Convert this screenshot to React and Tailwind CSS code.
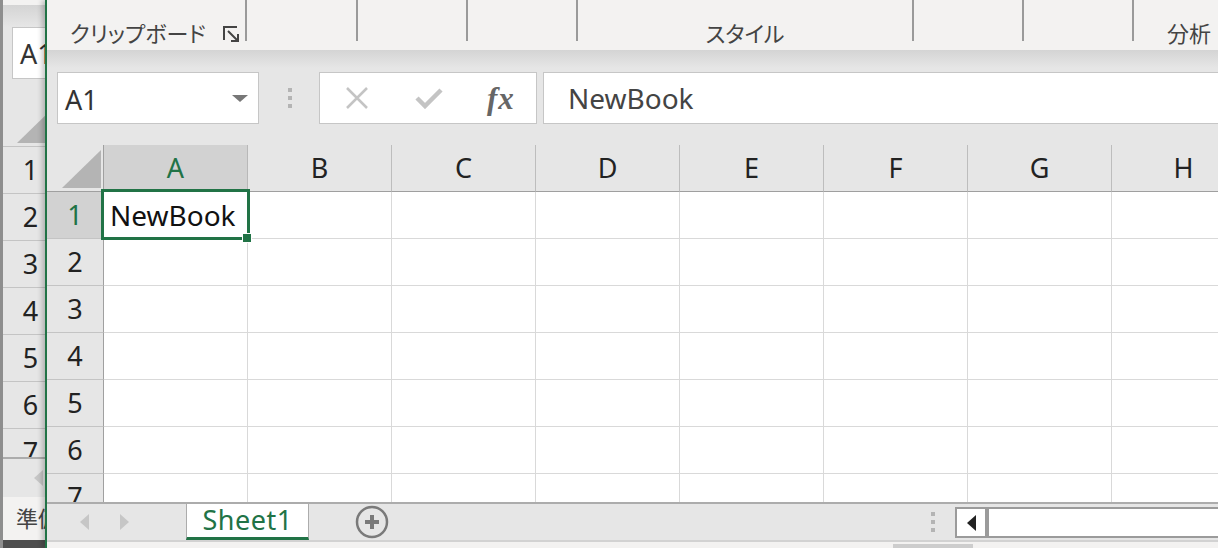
import clsx from "clsx";

const columns = ["A", "B", "C", "D", "E", "F", "G", "H"];
const rows = [1, 2, 3, 4, 5, 6, 7];

const ribbonGroups = [
  { width: "w-[198px]", label: "クリップボード", launcher: true, align: "pl-[23px]" },
  { width: "w-[109px]" },
  { width: "w-[108px]" },
  { width: "w-[108px]" },
  { width: "w-[334px]", label: "スタイル", align: "justify-center" },
  { width: "w-[108px]" },
  { width: "w-[108px]" },
  { width: "w-[140px]", label: "分析", align: "pl-[33px]" },
];

// grey select-all triangle in the sheet corner
const CornerMark = () => (
  <div className="h-[38px] w-[39px] bg-[#b4b4b4] [clip-path:polygon(100%_0,100%_100%,0_100%)]" />
);

const ArrowLeft = ({ color = "border-r-[#c6c6c6]" }) => (
  <span className={clsx("h-0 w-0 border-y-[8px] border-r-[9px] border-y-transparent", color)} />
);

const ArrowRight = () => (
  <span className="h-0 w-0 border-y-[8px] border-l-[9px] border-y-transparent border-l-[#c6c6c6]" />
);

const DotGrip = () => (
  <div className="flex flex-col gap-[4px]">
    <span className="h-[4px] w-[4px] bg-[#b4b4b4]" />
    <span className="h-[4px] w-[4px] bg-[#b4b4b4]" />
    <span className="h-[4px] w-[4px] bg-[#b4b4b4]" />
  </div>
);

// workbook window sitting behind, only its left edge shows
const BackWindow = () => (
  <aside className="flex w-[45px] shrink-0 flex-col overflow-hidden border-l-[3px] border-[#8e8e8e] bg-[#e6e6e6]">
    <div className="h-[5px] shrink-0 bg-[#f3f2f1]" />
    <div className="h-[22px] shrink-0 bg-gradient-to-b from-[#d4d4d4] to-[#e6e6e6]" />
    <div className="ml-[9px] flex h-[52px] w-[200px] shrink-0 items-center border border-[#c6c6c6] bg-white pl-[7px] pt-[3px] text-[27px] text-[#333]">
      A1
    </div>
    <div className="h-[21px] shrink-0" />
    <div className="flex h-[47px] w-[55px] shrink-0 items-end justify-end border-b border-[#c4c4c4] pb-[3px] pr-[2px]">
      <CornerMark />
    </div>
    <div className="h-[310px] shrink-0 overflow-hidden">
      {rows.map((r) => (
        <div
          key={r}
          className="flex h-[47px] w-[55px] items-center justify-center border-b border-[#c4c4c4] text-[27px] text-[#222]"
        >
          {r}
        </div>
      ))}
    </div>
    <div className="flex h-[40px] shrink-0 items-center border-t-2 border-[#acacac] pl-[31px]">
      <ArrowLeft />
    </div>
    <div className="flex h-[43px] shrink-0 items-center whitespace-nowrap bg-[#f3f2f1] pl-[13px] text-[22px] text-[#444]">
      準備完了
    </div>
    <div className="h-[8px] shrink-0 bg-[#4e4e4e]" />
  </aside>
);

const Ribbon = () => (
  <div className="flex h-[50px] shrink-0 items-start bg-[#f3f2f1]">
    {ribbonGroups.map((g, i) => (
      <div key={i} className="flex shrink-0">
        <div className={clsx("flex h-[41px] items-start pt-[22px]", g.width, g.align)}>
          {g.label && (
            <span className="whitespace-nowrap text-[22px] leading-[22px] text-[#444] [font-feature-settings:'palt']">
              {g.label}
            </span>
          )}
          {g.launcher && (
            <svg className="ml-auto mr-[6px] mt-[4px]" width="16" height="16" viewBox="0 0 16 16" fill="none" stroke="#444" strokeWidth="2">
              <path d="M1 14V1h13" />
              <path d="M5 5l9 9M8 15h7V8" />
            </svg>
          )}
        </div>
        {i < ribbonGroups.length - 1 && <div className="h-[41px] w-[2px] bg-[#9a9a9a]" />}
      </div>
    ))}
  </div>
);

const FormulaBar = () => (
  <div className="flex h-[95px] shrink-0 items-start bg-[linear-gradient(#d4d4d4,#e6e6e6_18px)] pt-[22px]">
    <div className="flex h-[52px] items-center">
      <div className="ml-[10px] flex h-[52px] w-[202px] items-center justify-between border border-[#c6c6c6] bg-white pl-[7px] pr-[10px]">
        <span className="pt-[4px] text-[27px] text-[#333]">A1</span>
        <span className="h-0 w-0 border-x-[8px] border-t-[7px] border-x-transparent border-t-[#777]" />
      </div>
      <div className="ml-[29px]">
        <DotGrip />
      </div>
      <div className="ml-[27px] flex h-[52px] w-[218px] items-center border border-[#c6c6c6] bg-white">
        <svg className="ml-[25px]" width="24" height="22" viewBox="0 0 24 22" fill="none" stroke="#c4c4c4" strokeWidth="2.5">
          <path d="M2 1l20 20M22 1L2 21" />
        </svg>
        <svg className="ml-[46px]" width="28" height="22" viewBox="0 0 28 22" fill="none" stroke="#c4c4c4" strokeWidth="4.5">
          <path d="M2 11l8 8L26 3" />
        </svg>
        <span className="ml-[44px] text-[31px] font-bold italic leading-none tracking-[1px] text-[#666] [font-family:'Liberation_Serif',serif]">
          fx
        </span>
      </div>
      <div className="ml-[6px] flex h-[52px] w-[720px] shrink-0 items-center border border-[#c6c6c6] bg-white pl-[24px] text-[28px] text-[#444]">
        NewBook
      </div>
    </div>
  </div>
);

const Grid = () => (
  <div className="relative h-[357px] shrink-0 overflow-hidden bg-white">
    <div className="flex h-[47px] bg-[#e6e6e6]">
      <div className="flex w-[57px] shrink-0 items-end justify-end border-r border-b border-[#a0a0a0] pb-[3px] pr-[2px]">
        <CornerMark />
      </div>
      {columns.map((c) => (
        <div
          key={c}
          className={clsx(
            "flex w-[144px] shrink-0 items-center justify-center border-r border-b text-[27px]",
            c === "A"
              ? "border-r-[#b8b8b8] border-b-[#9f9f9f] bg-[#d2d2d2] text-[#217346]"
              : "border-r-[#bdbdbd] border-b-[#9f9f9f] text-[#222]"
          )}
        >
          {c}
        </div>
      ))}
    </div>
    {rows.map((r) => (
      <div key={r} className="flex h-[47px]">
        <div
          className={clsx(
            "flex w-[57px] shrink-0 items-center justify-center border-r border-b border-r-[#a0a0a0] border-b-[#c4c4c4] text-[27px]",
            r === 1 ? "bg-[#d2d2d2] text-[#217346]" : "bg-[#e6e6e6] text-[#222]"
          )}
        >
          {r}
        </div>
        {columns.map((c) => (
          <div
            key={c}
            className="flex w-[144px] shrink-0 items-center border-r border-b border-[#d9d9d9] pl-[6px] text-[28px] text-[#111]"
          >
            {r === 1 && c === "A" ? "NewBook" : ""}
          </div>
        ))}
      </div>
    ))}
    {/* active cell frame and fill handle */}
    <div className="absolute left-[54px] top-[44px] h-[51px] w-[149px] border-[3px] border-[#217346]" />
    <div className="absolute left-[195px] top-[88px] h-[10px] w-[10px] border border-white bg-[#217346]" />
  </div>
);

const SheetTabs = () => (
  <div className="flex h-[38px] shrink-0 items-stretch overflow-hidden border-t-2 border-[#acacac] bg-[#e6e6e6]">
    <div className="ml-[33px] flex items-center">
      <ArrowLeft />
    </div>
    <div className="ml-[31px] flex items-center">
      <ArrowRight />
    </div>
    <div className="ml-[57px] -mt-[2px] flex w-[123px] shrink-0 items-center justify-center border-x border-b-[3px] border-x-[#acacac] border-b-[#217346] border-t-2 border-t-[#acacac] bg-white text-[27px] tracking-[0.5px] text-[#217346]">
      Sheet1
    </div>
    <div className="ml-[46px] flex items-center">
      <svg width="34" height="34" viewBox="0 0 34 34" fill="none" stroke="#7a7a7a">
        <circle cx="17" cy="17" r="15" strokeWidth="2.5" />
        <path d="M17 10v14M10 17h14" strokeWidth="4" />
      </svg>
    </div>
    <div className="ml-[542px] flex items-center">
      <DotGrip />
    </div>
    <div className="ml-[20px] mt-[3px] flex h-[31px] w-[320px] shrink-0 border-2 border-[#9b9b9b] bg-white">
      <div className="flex w-[28px] items-center justify-center">
        <ArrowLeft color="border-r-[#222]" />
      </div>
      <div className="w-[4px] bg-[#9b9b9b]" />
    </div>
  </div>
);

const App = () => {
  return (
    <div className="flex h-[548px] w-[1218px] overflow-hidden bg-[#e6e6e6] text-[#222] [font-family:'Noto_Sans','Noto_Sans_CJK_JP',sans-serif]">
      <BackWindow />
      <main className="relative z-10 flex min-w-0 flex-1 flex-col overflow-hidden border-l-2 border-[#217346] shadow-[-3px_0_5px_rgba(0,0,0,0.22)]">
        <Ribbon />
        <FormulaBar />
        <Grid />
        <SheetTabs />
        <div className="flex h-[8px] shrink-0 items-end border-t-2 border-[#d2d2d2] bg-[#f3f2f1]">
          <div className="ml-[846px] h-[4px] w-[80px] bg-[#cdcdcd]" />
        </div>
      </main>
    </div>
  );
};

export default App;
